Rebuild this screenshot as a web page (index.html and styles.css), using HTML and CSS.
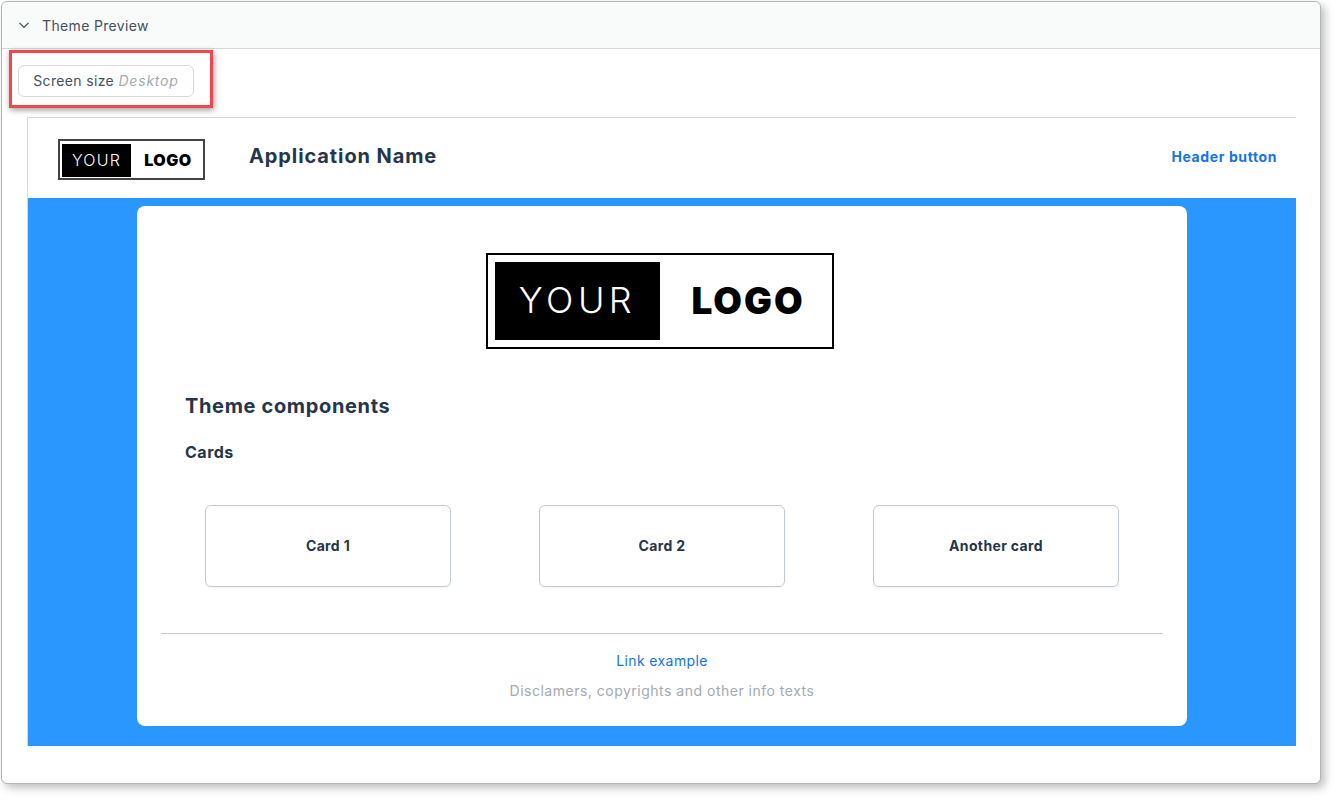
FILE: index.html
```html
<!DOCTYPE html>
<html lang="en">
<head>
  <meta charset="UTF-8" />
  <title>Theme Preview</title>
  <link rel="stylesheet" href="styles.css">
</head>
<body>
  <div class="window">
    <div class="panel-head">
      <svg class="chevron" width="12" height="12" viewBox="0 0 12 12"><path d="M1.5 3.8 6 8.3l4.5-4.5" fill="none" stroke="#3d4654" stroke-width="1.2"/></svg>
      <span>Theme Preview</span>
    </div>
    <div class="toolbar">
      <button class="size-btn">Screen size <em>Desktop</em></button>
    </div>
    <div class="preview">
      <div class="app-header">
        <div class="logo logo-small">
          <span class="logo-your">YOUR</span>
          <span class="logo-text">LOGO</span>
        </div>
        <div class="app-name">Application Name</div>
        <a class="header-btn">Header button</a>
      </div>
      <div class="app-body">
        <div class="sheet">
          <div class="logo logo-big">
            <span class="logo-your">YOUR</span>
            <span class="logo-text">LOGO</span>
          </div>
          <h2>Theme components</h2>
          <h3>Cards</h3>
          <div class="cards">
            <div class="card">Card 1</div>
            <div class="card">Card 2</div>
            <div class="card">Another card</div>
          </div>
          <div class="sheet-foot">
            <a class="link">Link example</a>
            <p class="info">Disclamers, copyrights and other info texts</p>
          </div>
        </div>
      </div>
    </div>
    <div class="highlight"></div>
  </div>
</body>
</html>
```

FILE: styles.css
```css
* {
  box-sizing: border-box;
  padding: 0;
  margin: 0;
}

body {
  font-family: 'Inter', sans-serif;
  background: #fff;
  color: #25364a;
  min-height: 100vh;
  padding: 1px 0 0 1px;
}

.window {
  position: relative;
  width: 1320px;
  height: 783px;
  background: #fff;
  border: 1px solid #b4b4b4;
  border-radius: 6px;
  box-shadow: 4px 4px 8px rgba(0,0,0,0.25);
}

.panel-head {
  display: flex;
  align-items: center;
  height: 47px;
  padding-left: 16px;
  background: #f9fafa;
  border-bottom: 1px solid #d8d8d8;
  border-radius: 6px 6px 0 0;
  font-size: 14px;
  letter-spacing: 0.35px;
  color: #46505e;
}

.chevron {
  margin-right: 12px;
}

.toolbar {
  height: 68px;
  padding: 16px 0 0 16px;
}

.size-btn {
  width: 176px;
  height: 32px;
  padding-bottom: 2px;
  border: 1px solid #d8d8d8;
  border-radius: 6px;
  background: #fff;
  font-family: inherit;
  font-size: 14px;
  letter-spacing: 0.35px;
  color: #46505e;
}

.size-btn em {
  letter-spacing: 0.8px;
  color: #a3a9b2;
}

.preview {
  width: 1269px;
  margin-left: 25px;
  border-top: 1px solid #d8d8d8;
  border-left: 1px solid #d8d8d8;
}

.app-header {
  display: flex;
  align-items: center;
  height: 80px;
  padding: 0 19px 0 30px;
}

.logo {
  display: flex;
  align-items: center;
  background: #fff;
  color: #000;
}

.logo-your {
  display: flex;
  align-items: center;
  justify-content: center;
  background: #000;
  color: #fff;
  font-weight: 300;
}

.logo-text {
  flex: 1;
  text-align: center;
  font-weight: 900;
}

.logo-small {
  width: 147px;
  height: 41px;
  margin-top: 3px;
  padding: 3px 2px 1px;
  border: 2px solid #444;
}

.logo-small .logo-your {
  width: 69px;
  height: 33px;
  padding-bottom: 2px;
  font-size: 16px;
  letter-spacing: 1.2px;
}

.logo-small .logo-text {
  padding: 0 0 2px 4px;
  font-size: 16px;
  letter-spacing: 0.5px;
}

.logo-big {
  width: 348px;
  height: 96px;
  padding: 7px;
  border: 2px solid #000;
}

.logo-big .logo-your {
  width: 165px;
  height: 78px;
  padding-bottom: 2px;
  font-size: 36px;
  letter-spacing: 4.5px;
}

.logo-big .logo-text {
  padding: 0 0 2px 11px;
  font-size: 37px;
  letter-spacing: 2px;
}

.app-name {
  margin: 0 0 4px 44px;
  font-size: 20px;
  letter-spacing: 0.9px;
  font-weight: 700;
}

.header-btn {
  margin: 0 0 4px auto;
  font-size: 14px;
  letter-spacing: 0.6px;
  font-weight: 700;
  color: #1473e6;
}

.app-body {
  height: 548px;
  padding-top: 8px;
  background: #2997ff;
}

.sheet {
  width: 1050px;
  height: 520px;
  margin-left: 109px;
  padding: 47px 24px 0;
  background: #fff;
  border-radius: 8px;
}

.sheet .logo-big {
  margin-left: 325px;
}

h2 {
  margin: 45px 0 0 24px;
  font-size: 20px;
  letter-spacing: 0.65px;
  line-height: 24px;
  font-weight: 700;
}

h3 {
  margin: 24px 0 0 24px;
  font-size: 16px;
  letter-spacing: 0.5px;
  line-height: 20px;
  font-weight: 700;
}

.cards {
  display: flex;
  gap: 88px;
  margin: 43px 0 0 44px;
}

.card {
  display: flex;
  align-items: center;
  justify-content: center;
  width: 246px;
  height: 82px;
  padding-bottom: 2px;
  border: 1px solid #c2c9d6;
  border-radius: 6px;
  font-size: 14px;
  letter-spacing: 0.35px;
  font-weight: 700;
  box-shadow: 0 1px 2px rgba(0,0,0,0.05);
}

.sheet-foot {
  margin-top: 46px;
  padding-top: 17px;
  border-top: 1px solid #c2c9d6;
  text-align: center;
  font-size: 14px;
}

.link {
  display: block;
  line-height: 20px;
  letter-spacing: 0.4px;
  color: #1473e6;
}

.info {
  margin-top: 10px;
  line-height: 20px;
  letter-spacing: 0.5px;
  color: #a3a9b2;
}

.highlight {
  position: absolute;
  left: 7px;
  top: 48px;
  width: 204px;
  height: 58px;
  border: 3px solid #f0474c;
  box-shadow: 1px 2px 6px rgba(0,0,0,0.4);
}
```
